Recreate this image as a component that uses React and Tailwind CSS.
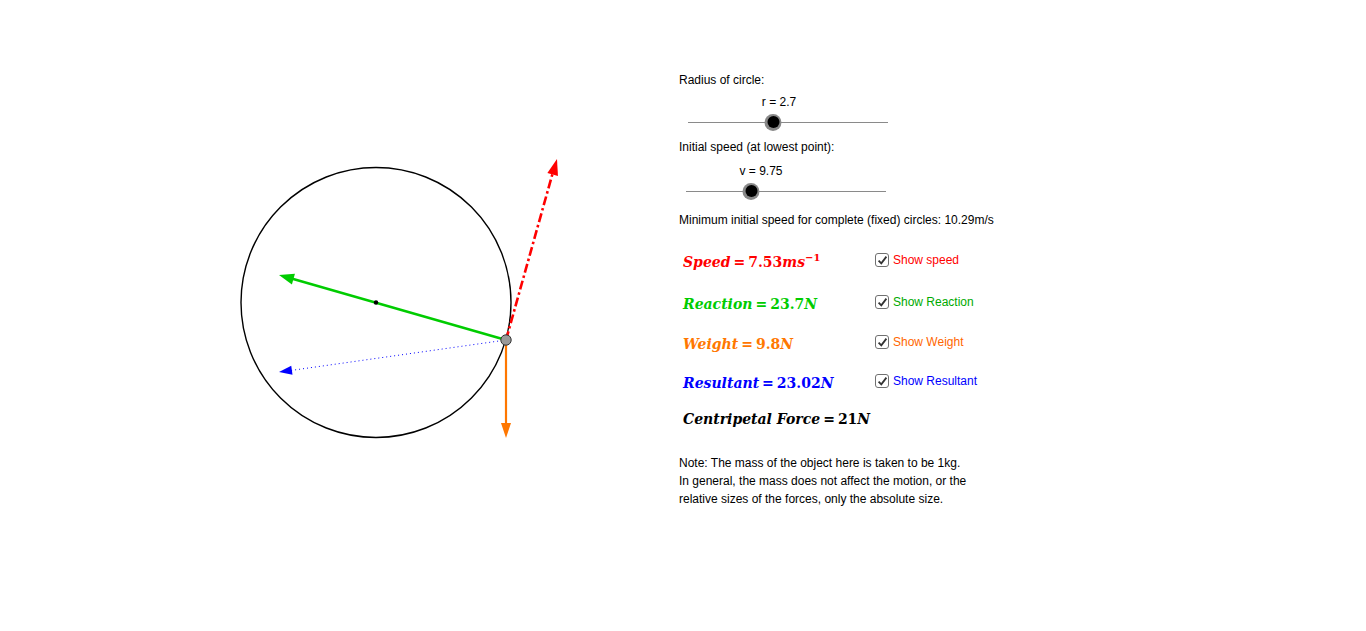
import React from "react";

// arrowhead triangle pointing at (tx, ty), coming from (fx, fy)
function head(fx, fy, tx, ty, len = 13, half = 5) {
  const dx = tx - fx;
  const dy = ty - fy;
  const d = Math.hypot(dx, dy);
  const ux = dx / d;
  const uy = dy / d;
  const bx = tx - ux * len;
  const by = ty - uy * len;
  return `${tx},${ty} ${bx - uy * half},${by + ux * half} ${bx + uy * half},${by - ux * half}`;
}

function Diagram() {
  const ox = 506;
  const oy = 340;
  return (
    <svg width="679" height="631" className="shrink-0">
      <circle cx="376" cy="302.5" r="135" fill="none" stroke="#000" strokeWidth="1.4" />
      {/* reaction */}
      <line x1={ox} y1={oy} x2="288" y2="277.5" stroke="#00cc00" strokeWidth="2.4" />
      <polygon points={head(ox, oy, 279, 275, 15, 5.5)} fill="#00cc00" />
      {/* resultant */}
      <line x1={ox} y1={oy} x2="290" y2="370.6" stroke="#0000ff" strokeWidth="1" strokeDasharray="1 3" />
      <polygon points={head(ox, oy, 279, 372, 13, 4.5)} fill="#0000ff" />
      {/* weight */}
      <line x1={ox} y1={oy} x2={ox} y2="428" stroke="#ff7700" strokeWidth="2.2" />
      <polygon points={head(ox, oy, 506, 438, 15, 5)} fill="#ff7700" />
      {/* speed */}
      <line x1={ox} y1={oy} x2="553" y2="172" stroke="#ff0000" strokeWidth="2.6" strokeDasharray="9 3 2.5 3" />
      <polygon points={head(ox, oy, 557, 159, 16, 5.5)} fill="#ff0000" />
      <circle cx="376" cy="302.5" r="2.2" fill="#000" />
      <circle cx={ox} cy={oy} r="5.2" fill="#999" stroke="#333" strokeWidth="1" />
    </svg>
  );
}

function Slider({ label, knob, labelOffset }) {
  return (
    <div className="w-[200px]">
      <div className="h-[14px] relative">
        <span className="absolute top-0 -translate-x-1/2 whitespace-nowrap" style={{ left: knob + labelOffset }}>
          {label}
        </span>
      </div>
      <div className="relative h-[26px]">
        <div className="absolute left-0 right-0 top-[13px] h-px bg-[#8a8a8a]" />
        <div
          className="absolute top-[4.5px] w-[17px] h-[17px] -translate-x-1/2 rounded-full bg-[#888] flex items-center justify-center"
          style={{ left: knob }}
        >
          <div className="w-[12px] h-[12px] rounded-full bg-black" />
        </div>
      </div>
    </div>
  );
}

function Check({ color, children }) {
  return (
    <div className="flex items-center gap-[4px] -translate-y-[2px]">
      <div className="w-[14px] h-[14px] rounded-[3px] border-[1.5px] border-[#707070] bg-white flex items-center justify-center">
        <svg width="11" height="11" viewBox="0 0 11 11">
          <path d="M1.6 5.6 L4.3 8.4 L9.4 1.6" fill="none" stroke="#333" strokeWidth="1.8" />
        </svg>
      </div>
      <span className={color}>{children}</span>
    </div>
  );
}

const math = "font-['DejaVu_Serif',serif] font-bold text-[14px] leading-[20px] whitespace-nowrap";

function Row({ formula, color, check, checkColor, mt }) {
  return (
    <div className={`flex items-center h-[20px] ${mt}`}>
      <div className={`w-[196px] pl-[4px] ${math} ${color}`}>{formula}</div>
      {check && <Check color={checkColor}>{check}</Check>}
    </div>
  );
}

function Eq() {
  return <span className="not-italic mx-[3px]">=</span>;
}

export default function App() {
  return (
    <div className="w-[1366px] h-[631px] bg-white flex font-['Liberation_Sans',Arial,sans-serif] text-[12px] leading-[14px] text-black overflow-hidden">
      <Diagram />
      <div className="pt-[73px] flex flex-col">
        <div>Radius of circle:</div>
        <div className="ml-[9px] mt-[8px]">
          <Slider label="r = 2.7" knob={85} labelOffset={6} />
        </div>
        <div className="mt-[5px]">Initial speed (at lowest point):</div>
        <div className="ml-[7px] mt-[10px]">
          <Slider label="v = 9.75" knob={65} labelOffset={10} />
        </div>
        <div className="mt-[9px]">Minimum initial speed for complete (fixed) circles: 10.29m/s</div>

        <Row
          mt="mt-[25px]"
          color="text-[#ff0000]"
          checkColor="text-[#ff0000]"
          check="Show speed"
          formula={
            <span>
              <i>Speed</i>
              <Eq />
              7.53<i>ms</i>
              <sup className="text-[10px] -top-[6px]">−1</sup>
            </span>
          }
        />
        <Row
          mt="mt-[22px]"
          color="text-[#00cc00]"
          checkColor="text-[#00aa00]"
          check="Show Reaction"
          formula={
            <span>
              <i>Reaction</i>
              <Eq />
              23.7<i>N</i>
            </span>
          }
        />
        <Row
          mt="mt-[20px]"
          color="text-[#ff7700]"
          checkColor="text-[#ff6600]"
          check="Show Weight"
          formula={
            <span>
              <i>Weight</i>
              <Eq />
              9.8<i>N</i>
            </span>
          }
        />
        <Row
          mt="mt-[19px]"
          color="text-[#0000ff]"
          checkColor="text-[#0000ff]"
          check="Show Resultant"
          formula={
            <span>
              <i>Resultant</i>
              <Eq />
              23.02<i>N</i>
            </span>
          }
        />
        <Row
          mt="mt-[16px]"
          color="text-black"
          formula={
            <span>
              <i>Centripetal Force</i>
              <Eq />
              21<i>N</i>
            </span>
          }
        />
        <div className="mt-[25px] leading-[18px]">
          <div>Note: The mass of the object here is taken to be 1kg.</div>
          <div>In general, the mass does not affect the motion, or the</div>
          <div>relative sizes of the forces, only the absolute size.</div>
        </div>
      </div>
    </div>
  );
}
